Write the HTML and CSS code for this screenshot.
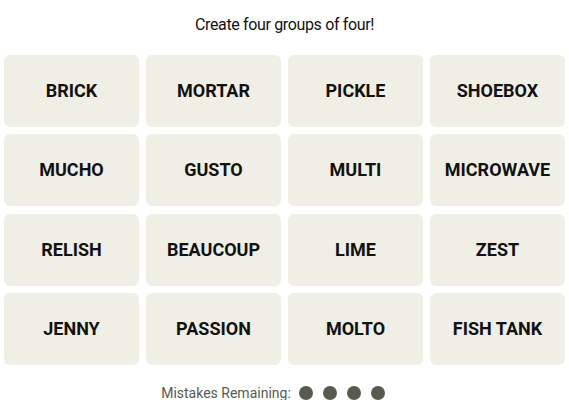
FILE: index.html
```html
<!DOCTYPE html>
<html lang="en">
<head>
<meta charset="utf-8">
<title>Connections</title>
<link rel="stylesheet" href="styles.css">
</head>
<body>
<main class="game">
  <p class="prompt">Create four groups of four!</p>
  <div class="board">
    <button class="tile">BRICK</button>
    <button class="tile">MORTAR</button>
    <button class="tile">PICKLE</button>
    <button class="tile">SHOEBOX</button>
    <button class="tile">MUCHO</button>
    <button class="tile">GUSTO</button>
    <button class="tile">MULTI</button>
    <button class="tile">MICROWAVE</button>
    <button class="tile">RELISH</button>
    <button class="tile">BEAUCOUP</button>
    <button class="tile">LIME</button>
    <button class="tile">ZEST</button>
    <button class="tile">JENNY</button>
    <button class="tile">PASSION</button>
    <button class="tile">MOLTO</button>
    <button class="tile">FISH TANK</button>
  </div>
  <div class="mistakes">
    <span class="mistakes-label">Mistakes Remaining:</span>
    <span class="dots">
      <span class="dot"></span>
      <span class="dot"></span>
      <span class="dot"></span>
      <span class="dot"></span>
    </span>
  </div>
</main>
</body>
</html>
```

FILE: styles.css
```css
html, body {
  margin: 0;
  padding: 0;
  background: #ffffff;
}

body {
  font-family: Roboto, "Liberation Sans", sans-serif;
  color: #121212;
}

.game {
  padding: 0 4px;
}

.prompt {
  margin: 0;
  padding-top: 15px;
  height: 40px;
  line-height: 20px;
  font-size: 16px;
  letter-spacing: -0.35px;
  text-align: center;
  color: #121212;
}

.board {
  display: grid;
  grid-template-columns: repeat(4, 135px);
  grid-auto-rows: 72px;
  column-gap: 7px;
  row-gap: 7.33px;
}

.tile {
  border: none;
  margin: 0;
  padding: 0 0 1px;
  background: #efefe6;
  border-radius: 6px;
  font-family: Roboto, "Liberation Sans", sans-serif;
  font-weight: 700;
  font-size: 18px;
  color: #121212;
  text-transform: uppercase;
  display: flex;
  align-items: center;
  justify-content: center;
}

.mistakes {
  margin-top: 21px;
  height: 14px;
  display: flex;
  align-items: center;
  justify-content: center;
  gap: 8px;
  padding-right: 23px;
}

.mistakes-label {
  font-size: 14px;
  color: #5a594e;
}

.dots {
  display: flex;
  gap: 10px;
}

.dot {
  width: 14px;
  height: 14px;
  border-radius: 50%;
  background: #5a594e;
}
```
